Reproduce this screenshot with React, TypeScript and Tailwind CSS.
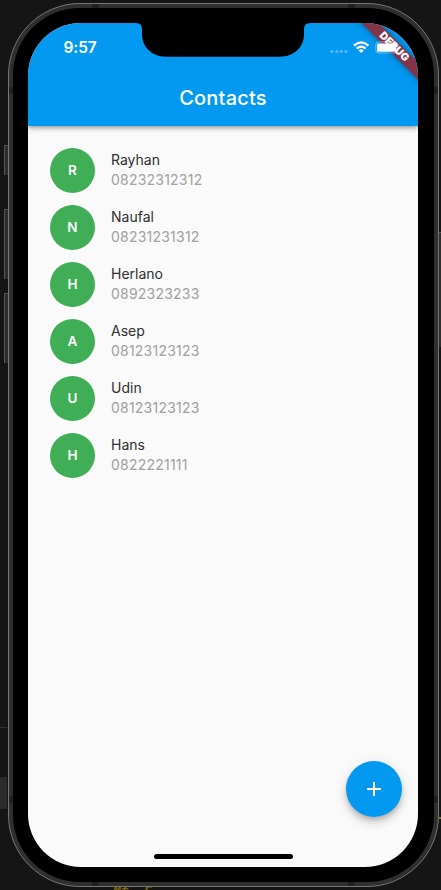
const contacts = [
  { name: "Rayhan", phone: "08232312312" },
  { name: "Naufal", phone: "08231231312" },
  { name: "Herlano", phone: "0892323233" },
  { name: "Asep", phone: "08123123123" },
  { name: "Udin", phone: "08123123123" },
  { name: "Hans", phone: "0822221111" },
];

function StatusBar() {
  return (
    <div className="flex h-[47px] items-start justify-between pr-[18px] pl-[35.5px]">
      <span className="pt-[15px] text-[15.5px] leading-[20px] font-semibold tracking-[-0.1px]">9:57</span>
      <svg className="relative z-10 mt-4" width="70" height="16" viewBox="330 39 70 16" fill="#fff">
        <g opacity="0.35">
          <circle cx="332" cy="51.5" r="1.6" />
          <circle cx="336.8" cy="51.5" r="1.6" />
          <circle cx="341.3" cy="51.5" r="1.6" />
          <circle cx="345.9" cy="51.5" r="1.6" />
        </g>
        <g fill="none" stroke="#fff" strokeWidth="2.2">
          <path d="M354 45.6Q361.2 39 368.4 45.6" />
          <path d="M356.7 48.6Q361.2 44.6 365.7 48.6" />
        </g>
        <path d="M358.7 50.4Q361.2 48.3 363.7 50.4L361.2 53Z" />
        <rect x="375.8" y="42" width="22" height="11" rx="2.8" fill="none" stroke="#fff" strokeOpacity="0.4" />
        <rect x="377" y="43.5" width="19.3" height="8.3" rx="1.5" />
      </svg>
    </div>
  );
}

function DebugBanner() {
  return (
    <div className="pointer-events-none absolute top-0 right-0 flex size-12 items-center justify-center">
      <div className="flex h-3 w-28 shrink-0 rotate-45 items-center justify-center bg-[#82344a] text-[10.6px] leading-none font-black text-white shadow-[0_0_6px_rgba(0,0,0,0.4)]">
        DEBUG
      </div>
    </div>
  );
}

function LeftGutter() {
  return (
    <div className="flex w-2 shrink-0 flex-col items-end pt-[145px]">
      <div className="h-[30px] w-1 border-t border-l border-[#555] bg-[#2d2d2d]" />
      <div className="mt-[34px] h-[70px] w-1 border-t border-l border-[#555] bg-[#2d2d2d]" />
      <div className="mt-[14px] h-[70px] w-1 border-t border-l border-[#555] bg-[#2d2d2d]" />
      <div className="mt-[364px] h-px w-[7px] self-start bg-[#333]" />
      <div className="mt-[49px] h-8 w-[7px] self-start bg-[#2b2b2b]" />
    </div>
  );
}

function RightGutter() {
  return (
    <div className="flex w-0.5 shrink-0 flex-col gap-[470px] pt-[232px]">
      <div className="h-[115px] border-t border-[#555] bg-[#2d2d2d]" />
      <div className="h-0.5 bg-[#8a6c10]" />
    </div>
  );
}

function HorizontalBands() {
  return (
    <div className="flex h-1 shrink-0 justify-between px-[83px]">
      <span className="w-[7px] bg-[#202020]" />
      <span className="w-[7px] bg-[#202020]" />
    </div>
  );
}

function VerticalBands() {
  return (
    <div className="flex w-1 shrink-0 flex-col justify-between py-[79px]">
      <span className="h-[7px] bg-[#202020]" />
      <span className="h-[7px] bg-[#202020]" />
    </div>
  );
}

function Notch() {
  return (
    <svg className="absolute top-0 left-[108px]" width="174" height="34" viewBox="0 0 174 34">
      <path d="M0 0H174Q168 0 168 6V11C168 24 158 33.7 144 33.7H30C16 33.7 6 24 6 11V6Q6 0 0 0Z" />
    </svg>
  );
}

function Screen() {
  return (
    <div className="relative flex h-[844px] w-[390px] flex-col overflow-hidden rounded-[53px] bg-[#fafafa]">
      <DebugBanner />
      <header className="h-[103px] shrink-0 bg-[#0399f1] text-white shadow-[0_2px_4px_rgba(0,0,0,0.3),0_1px_8px_rgba(0,0,0,0.12)]">
        <StatusBar />
        <h1 className="flex h-14 items-center justify-center text-[20px] font-medium tracking-[0.2px]">Contacts</h1>
      </header>
      <ul className="flex flex-col gap-3 pt-[22px] pl-[22px]">
        {contacts.map((c) => (
          <li key={c.name} className="flex h-[45px] gap-4">
            <div className="flex size-[45px] items-center justify-center rounded-full bg-[#40ad57] pb-px text-[13.5px] font-semibold text-white">
              {c.name[0]}
            </div>
            <div className="pt-[2px] text-[14px] leading-5">
              <p className="text-[#2f2f2f]">{c.name}</p>
              <p className="tracking-[0.22px] text-[#a0a0a0]">{c.phone}</p>
            </div>
          </li>
        ))}
      </ul>
      <button className="mt-auto mr-4 mb-[37px] flex size-14 shrink-0 items-center justify-center self-end rounded-full bg-[#0399f1] shadow-[0_3px_5px_-1px_rgba(0,0,0,0.2),0_6px_10px_rgba(0,0,0,0.14),0_1px_18px_rgba(0,0,0,0.06)]">
        <svg width="14" height="14" viewBox="0 0 14 14" fill="#fff">
          <path d="M6 0H8V6H14V8H8V14H6V8H0V6H6Z" />
        </svg>
      </button>
      <div className="mb-2 h-[5px] w-[139px] shrink-0 self-center rounded-full bg-black" />
      <Notch />
    </div>
  );
}

export default function App() {
  return (
    <div className="flex h-[890px] w-[441px] flex-col overflow-hidden bg-[#151515] font-[Inter,sans-serif]">
      <div className="flex h-[887px] shrink-0">
        <LeftGutter />
        <div className="mt-[3px] flex h-[884px] w-[431px] shrink-0 flex-col rounded-[72px] border border-[#777] bg-[#2f2f2f]">
          <HorizontalBands />
          <div className="flex grow">
            <VerticalBands />
            <div className="grow rounded-[67px] bg-black py-[15px] pl-[15px]">
              <Screen />
            </div>
            <VerticalBands />
          </div>
          <HorizontalBands />
        </div>
        <RightGutter />
      </div>
      <div className="h-[3px] overflow-hidden pl-[113px] font-['Liberation_Mono',monospace] text-[13px] leading-[10px] font-bold whitespace-pre text-[#7a6210] italic">
        Mf  E
      </div>
    </div>
  );
}
